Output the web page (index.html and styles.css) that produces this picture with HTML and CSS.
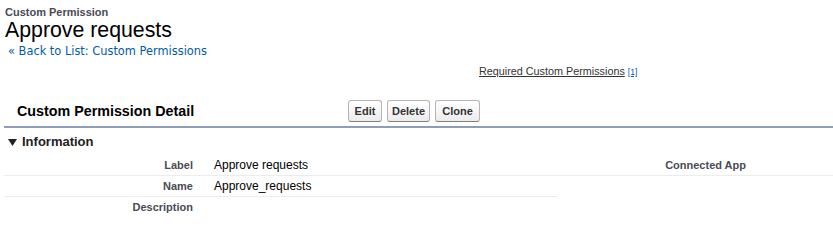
FILE: index.html
```html
<!DOCTYPE html>
<html lang="en">
<head>
    <meta charset="UTF-8">
    <title>Custom Permission: Approve requests</title>
    <link rel="stylesheet" href="styles.css">
</head>
<body>
    <div class="page">
        <div class="page-title">
            <h2 class="page-type">Custom Permission</h2>
            <h1 class="page-description">Approve requests</h1>
            <div class="breadcrumb">&laquo;&nbsp;<a href="#">Back to List: Custom Permissions</a></div>
        </div>
        <div class="list-links">
            <a href="#" class="list-link">Required Custom Permissions</a>
            <span class="count">[1]</span>
        </div>
        <div class="page-block">
            <div class="pb-header">
                <h2 class="pb-title">Custom Permission Detail</h2>
                <div class="pb-buttons">
                    <button class="btn">Edit</button>
                    <button class="btn">Delete</button>
                    <button class="btn">Clone</button>
                </div>
            </div>
            <div class="pb-body">
                <h3 class="section-head">
                    <svg class="twisty" width="9" height="7" viewBox="0 0 9 7"><path d="M0 0 H9 L4.5 7 Z" fill="#222"/></svg>
                    Information
                </h3>
                <table class="detail-list">
                    <tr>
                        <td class="label-col line">Label</td>
                        <td class="data-col line">Approve requests</td>
                        <td class="label-col line">Connected App</td>
                        <td class="data-col last line"></td>
                    </tr>
                    <tr>
                        <td class="label-col line">Name</td>
                        <td class="data-col line">Approve_requests</td>
                        <td class="label-col"></td>
                        <td class="data-col last"></td>
                    </tr>
                    <tr>
                        <td class="label-col">Description</td>
                        <td class="data-col"></td>
                        <td class="label-col"></td>
                        <td class="data-col last"></td>
                    </tr>
                </table>
            </div>
        </div>
    </div>
</body>
</html>
```

FILE: styles.css
```css
body {
    margin: 0;
    padding: 0;
    background-color: #ffffff;
    font-family: "Liberation Sans", Arial, sans-serif;
    color: #000;
}

.page {
    padding-left: 4px;
}

/* page title area */
.page-title {
    padding-top: 5px;
}

.page-type {
    margin: 0 0 0 1px;
    font-size: 11px;
    line-height: 14px;
    font-weight: bold;
    color: #4a4a56;
}

.page-description {
    margin: 0 0 0 1px;
    font-size: 21.3px;
    line-height: 22px;
    font-weight: normal;
    color: #000;
}

.breadcrumb {
    margin: 3px 0 0 4px;
    font-family: "DejaVu Sans", Verdana, sans-serif;
    font-size: 11.4px;
    line-height: 14px;
    color: #015ba7;
}

.breadcrumb a {
    color: #015ba7;
    text-decoration: none;
}

/* related list links */
.list-links {
    padding: 6px 0 0 475px;
    height: 31px;
    font-size: 10.8px;
    line-height: 14px;
}

.list-link {
    color: #333;
    text-decoration: underline;
}

.count {
    font-size: 8.5px;
    color: #015ba7;
    text-decoration: underline;
}

/* detail block */
.pb-header {
    display: flex;
    align-items: center;
    height: 31px;
    padding-left: 13px;
}

.pb-title {
    margin: 0;
    width: 331px;
    font-size: 14.3px;
    font-weight: bold;
    color: #000;
}

.pb-buttons {
    display: flex;
    gap: 5px;
}

.btn {
    height: 22px;
    padding: 0 4px;
    font-family: "Liberation Sans", Arial, sans-serif;
    font-size: 11px;
    font-weight: bold;
    color: #333;
    background: linear-gradient(#ffffff, #ececec);
    border: 1px solid #b5b5b5;
    border-bottom-color: #7f7f7f;
    border-radius: 3px;
}

.btn:nth-child(1) { width: 34px; }
.btn:nth-child(2) { width: 43px; }
.btn:nth-child(3) { width: 45px; }

.pb-body {
    border-top: 2px solid #8e9dbe;
}

.section-head {
    margin: 0;
    height: 27px;
    padding-left: 4px;
    display: flex;
    align-items: center;
    gap: 5px;
    font-size: 13px;
    font-weight: bold;
    color: #222;
}

.twisty {
    margin-top: 1px;
}

/* field table */
.detail-list {
    width: 829px;
    border-collapse: collapse;
}

.detail-list td {
    height: 20px;
    padding: 0;
    vertical-align: middle;
}

.detail-list td.line {
    border-bottom: 1px solid #ececec;
}

.label-col {
    width: 189px;
    padding-right: 10px !important;
    text-align: right;
    font-size: 11px;
    font-weight: bold;
    color: #4a4a56;
}

.data-col {
    width: 343px;
    padding-left: 11px !important;
    font-size: 12px;
    color: #000;
}

.data-col.last {
    width: 66px;
}
```
